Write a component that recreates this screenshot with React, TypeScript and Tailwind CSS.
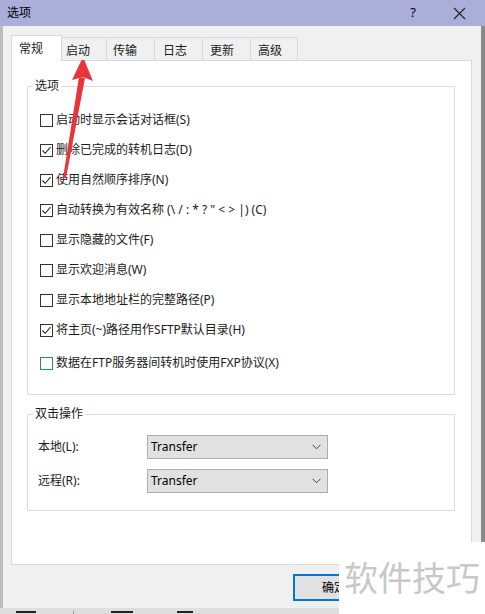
import React from "react";

const font = { fontFamily: '"Noto Sans", "Noto Sans CJK SC", sans-serif' };

const options = [
  { label: "启动时显示会话对话框(S)", checked: false },
  { label: "删除已完成的转机日志(D)", checked: true },
  { label: "使用自然顺序排序(N)", checked: true },
  { label: '自动转换为有效名称 (\\ / : * ? " < > |) (C)', checked: true },
  { label: "显示隐藏的文件(F)", checked: false },
  { label: "显示欢迎消息(W)", checked: false },
  { label: "显示本地地址栏的完整路径(P)", checked: false },
  { label: "将主页(~)路径用作SFTP默认目录(H)", checked: true },
];

const tabs = [
  { name: "启动", w: "w-[45px]", pl: "pl-[4px]" },
  { name: "传输", w: "w-[48px]", pl: "pl-[6px]" },
  { name: "日志", w: "w-[48px]", pl: "pl-[8px]" },
  { name: "更新", w: "w-[48px]", pl: "pl-[7px]" },
  { name: "高级", w: "w-[47px]", pl: "pl-[7px]" },
];

const CheckBox = ({ checked, focus }: { checked: boolean; focus?: boolean }) => (
  <span
    className={`w-[13px] h-[13px] shrink-0 border bg-white flex items-center justify-center ${
      focus ? "border-[#2b7bb9]" : "border-[#333333]"
    }`}
  >
    {checked ? (
      <svg width="11" height="11" viewBox="0 0 11 11">
        <path d="M1.5 5.5 L4.2 8.3 L9.5 2.2" fill="none" stroke="#222" strokeWidth="1.1" />
      </svg>
    ) : null}
  </span>
);

const Combo = ({ value }: { value: string }) => (
  <div className="w-[181px] h-[24px] bg-[#e1e1e1] border border-[#adadad] flex items-center justify-between pl-[3px] pr-[6px] text-[12px] text-black">
    <span>{value}</span>
    <svg width="9" height="6" viewBox="0 0 9 6">
      <path d="M0.5 0.8 L4.5 4.8 L8.5 0.8" fill="none" stroke="#444" strokeWidth="1" />
    </svg>
  </div>
);

const App = () => {
  return (
    <div className="relative w-[485px] h-[614px] overflow-hidden bg-[#c4c4c4] text-[#1b1b1b]" style={font}>
      {/* title bar */}
      <div className="h-[26px] bg-[#aaaed8] flex items-center justify-between pl-[7px] pr-[19px] text-[12px] text-black">
        <span>选项</span>
        <div className="flex items-center gap-[37px]">
          <span className="text-[13px]">?</span>
          <svg width="13" height="13" viewBox="0 0 13 13">
            <path d="M1 1 L12 12 M12 1 L1 12" stroke="#222" strokeWidth="1.1" />
          </svg>
        </div>
      </div>

      <div className="flex h-[582px]">
        <div className="w-[3px] bg-[#bdbdbd]" />
        <div className="flex-1 bg-[#f0f0f0] flex flex-col pl-[8px] pr-[9px] pt-[9px]">
          {/* tabs */}
          <div className="flex items-end h-[25px] text-[12px] relative z-10">
            <div className="w-[51px] bg-white border border-b-0 border-[#d9d9d9] pl-[7px] pt-[4px] mb-[-1px] h-[26px]">
              常规
            </div>
            {tabs.map((t) => (
              <div
                key={t.name}
                className={`${t.w} ${t.pl} h-[23px] border-t border-r border-[#d9d9d9] bg-[#f0f0f0] pt-[4px]`}
              >
                {t.name}
              </div>
            ))}
          </div>

          {/* panel */}
          <div className="h-[505px] bg-white border border-[#d9d9d9] pt-[16px] text-[12px]">
            <fieldset className="ml-[15px] w-[428px] border border-[#dcdcdc] pl-[12px] pt-[10px] pb-[16px]">
              <legend className="ml-[-7px] px-[2px]">选项</legend>
              {options.map((o) => (
                <div key={o.label} className="h-[30px] flex items-center gap-[3px]">
                  <CheckBox checked={o.checked} />
                  <span>{o.label}</span>
                </div>
              ))}
              <div className="h-[30px] mt-[3px] flex items-center gap-[3px]">
                <CheckBox checked={false} focus />
                <span>数据在FTP服务器间转机时使用FXP协议(X)</span>
              </div>
            </fieldset>

            <fieldset className="ml-[15px] mt-[10px] w-[428px] border border-[#dcdcdc] pl-[10px] pt-[12px] pb-[17px]">
              <legend className="ml-[-5px] px-[2px]">双击操作</legend>
              <div className="flex flex-col gap-[10px]">
                <div className="flex items-center">
                  <span className="w-[109px]">本地(L):</span>
                  <Combo value="Transfer" />
                </div>
                <div className="flex items-center">
                  <span className="w-[109px]">远程(R):</span>
                  <Combo value="Transfer" />
                </div>
              </div>
            </fieldset>
          </div>

          {/* buttons */}
          <div className="flex pl-[282px] pt-[9px]">
            <button className="w-[76px] h-[27px] bg-[#e1e1e1] border-2 border-[#0078d7] text-[12px] text-black pl-[6px]">
              确定
            </button>
          </div>
        </div>
        <div className="w-[4px] bg-[#8a8a8a]" />
      </div>

      {/* window behind, only its top edge shows */}
      <div className="h-[6px] bg-[#dedede] flex items-start pt-[3px] pl-[16px]">
        <div className="w-[20px] h-[2px] bg-[#222]" />
        <div className="w-[1px] h-[3px] bg-[#999] ml-[37px]" />
        <div className="w-[22px] h-[2px] bg-[#222] ml-[37px]" />
        <div className="w-[16px] h-[2px] bg-[#222] ml-[44px]" />
      </div>

      {/* watermark */}
      <div className="absolute left-[339px] top-[542px] w-[146px] h-[72px] bg-white flex items-center justify-center text-[34px] text-[#c8c8c8]">
        软件技巧
      </div>

      {/* red arrow */}
      <svg className="absolute left-0 top-0 pointer-events-none" width="485" height="614" viewBox="0 0 485 614">
        <polygon points="83,57 93,81 83,77 72,80" fill="#e8343a" />
        <polygon points="79,77 85,78 66,178 63,178" fill="#e8343a" />
      </svg>
    </div>
  );
};

export default App;
